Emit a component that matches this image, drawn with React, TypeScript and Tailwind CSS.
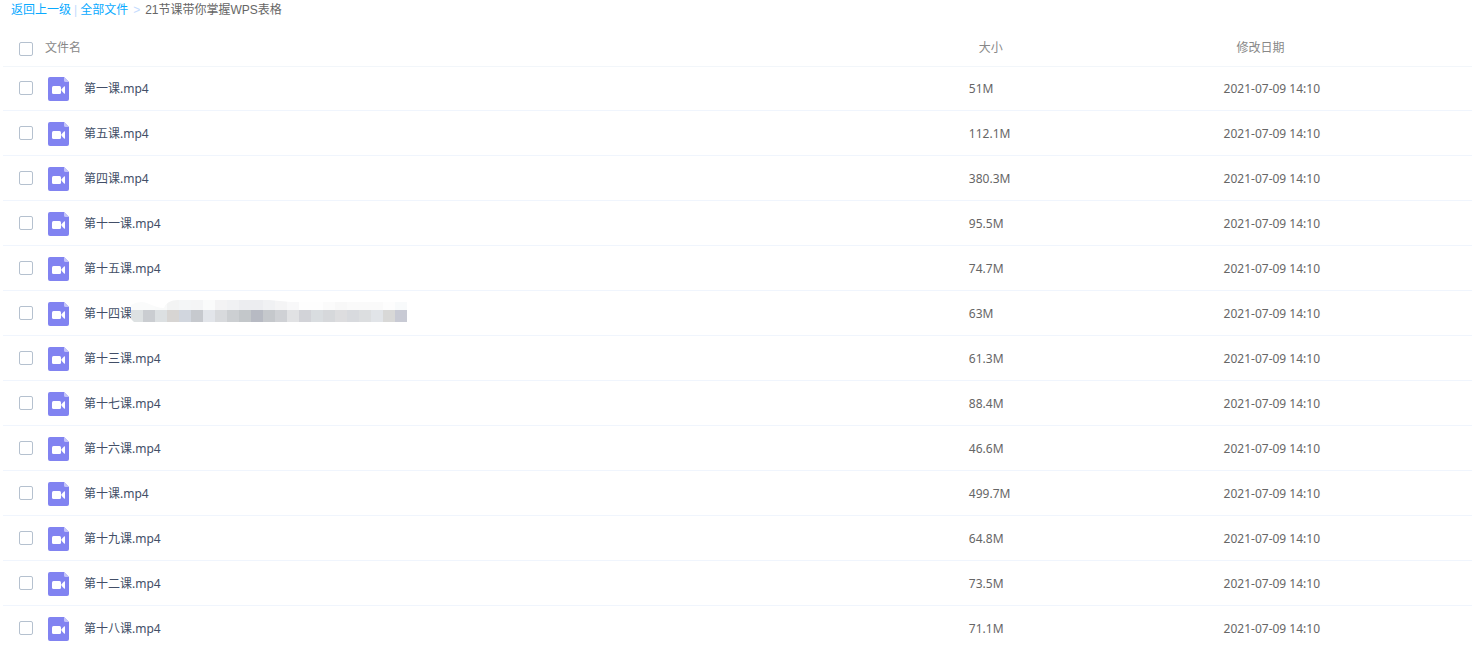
const FILES = [
  { name: '第一课.mp4', size: '51M' },
  { name: '第五课.mp4', size: '112.1M' },
  { name: '第四课.mp4', size: '380.3M' },
  { name: '第十一课.mp4', size: '95.5M' },
  { name: '第十五课.mp4', size: '74.7M' },
  { name: '第十四课', size: '63M', masked: true },
  { name: '第十三课.mp4', size: '61.3M' },
  { name: '第十七课.mp4', size: '88.4M' },
  { name: '第十六课.mp4', size: '46.6M' },
  { name: '第十课.mp4', size: '499.7M' },
  { name: '第十九课.mp4', size: '64.8M' },
  { name: '第十二课.mp4', size: '73.5M' },
  { name: '第十八课.mp4', size: '71.1M' },
];

const MODIFIED = '2021-07-09 14:10';

const MASK_COLORS = [
  '#dde1e2', '#cacdd1', '#dce0e2', '#d7d5d3', '#d1d6de', '#c6c9ce', '#e2e5ea', '#d8dadd',
  '#cccfd2', '#c3c7ca', '#b7bac3', '#c5c8cc', '#cfd1d5', '#e1e2e4', '#d2d3d8', '#d9dde0',
  '#d6d8db', '#dddddf', '#d8dade', '#dcdee0', '#e1e4e8', '#d8d8d7', '#c8cad4',
];

const MASK_TOP_COLORS = [
  '#fafbfb', '#fafbfb', '#f9fafa', '#f3f4f4', '#f4f6f7', '#f4f5f6', '#fafbfb', '#f3f3f4',
  '#f0f1f3', '#ecedf0', '#ecedf0', '#f0f1f3', '#f4f4f5', '#f8f8f9', '#fefefe', '#fefefe',
  '#fbfbfb', '#f8f8f8', '#fafafa', '#fafafa', '#fafafa', '#fdfdfd', '#f8fafb',
];

function VideoIcon() {
  return (
    <svg width="21" height="24" viewBox="0 0 21 24" className="shrink-0" aria-hidden="true">
      <path d="M2 0H16L21 5V22Q21 24 19 24H2Q0 24 0 22V2Q0 0 2 0Z" fill="#8183f1" />
      <path d="M16 0L21 5H17.5Q16 5 16 3.5Z" fill="#c3c4f9" />
      <rect x="4" y="9" width="9" height="8" rx="1.5" fill="#fff" />
      <path d="M13.5 12.3L16 9.6Q17 8.8 17 10V16Q17 17.2 16 16.400L13.5 13.700Z" fill="#fff" />
    </svg>
  );
}

function Mosaic() {
  return (
    <svg width="276" height="22" viewBox="0 0 276 22" className="absolute left-full bottom-0 -ml-px" aria-hidden="true">
      <clipPath id="mask-shape">
        <path d="M0 10V5Q8 0 16 3Q26 8 33 8Q36 0 47 0H138L160 2H276V22H3L0 19Z" />
      </clipPath>
      <g clipPath="url(#mask-shape)">
        {MASK_TOP_COLORS.map((color, i) => (
          <rect key={i} x={i * 12} y="0" width="12" height="10" fill={color} />
        ))}
        {MASK_COLORS.map((color, i) => (
          <rect key={i} x={i * 12} y="10" width="12" height="12" fill={color} />
        ))}
      </g>
    </svg>
  );
}

function Checkbox({ label }: { label: string }) {
  return (
    <input
      type="checkbox"
      aria-label={label}
      className="block size-[14px] shrink-0 appearance-none rounded-[2px] border border-[#b5c1cf] bg-white checked:bg-[#09aaff]"
    />
  );
}

export default function App() {
  return (
    <main className="bg-white font-['Noto_Sans','Noto_Sans_CJK_SC',sans-serif] text-xs text-[#666]">
      <nav className="flex h-[30px] gap-1 pl-[11px] pt-[2px] font-['Liberation_Sans','Noto_Sans_CJK_SC',sans-serif] leading-4">
        <a href="#back" className="text-[#09aaff]">返回上一级</a>
        <span className="-mx-px text-[#c4dbfe]">|</span>
        <a href="#all" className="text-[#09aaff]">全部文件</a>
        <span className="px-px text-[#c4dbfe]">&gt;</span>
        <span>21节课带你掌握WPS表格</span>
      </nav>

      <div className="pl-[3px]">
        <table className="w-full table-fixed border-separate border-spacing-0 text-left [&_td]:border-b [&_td]:border-[#f0f5fd] [&_th]:border-b [&_th]:border-[#f2f6fa]">
          <thead>
            <tr className="h-[37px] text-[#888]">
              <th className="w-[65%] font-normal">
                <div className="flex items-center gap-3 pl-4">
                  <div className="pt-[2px]">
                    <Checkbox label="全选" />
                  </div>
                  文件名
                </div>
              </th>
              <th className="w-[17%] pl-[21px] font-normal">大小</th>
              <th className="w-[18%] pl-[29px] font-normal">修改日期</th>
            </tr>
          </thead>
          <tbody>
            {FILES.map((file) => (
              <tr key={file.name} className="h-[45px] first:h-[44px] [&>td]:pt-[2px] first:[&>td]:pt-px">
                <td>
                  <div className="flex items-center pl-4">
                    <div className="pb-[2px]">
                      <Checkbox label={file.name} />
                    </div>
                    <div className="ml-[15px] flex items-center gap-[15px]">
                      <VideoIcon />
                      <a href="#file" className="relative text-[#424e67]">
                        {file.name}
                        {file.masked && <Mosaic />}
                      </a>
                    </div>
                  </div>
                </td>
                <td className="pl-[11px]">{file.size}</td>
                <td className="pl-4">{MODIFIED}</td>
              </tr>
            ))}
          </tbody>
        </table>
      </div>
    </main>
  );
}
